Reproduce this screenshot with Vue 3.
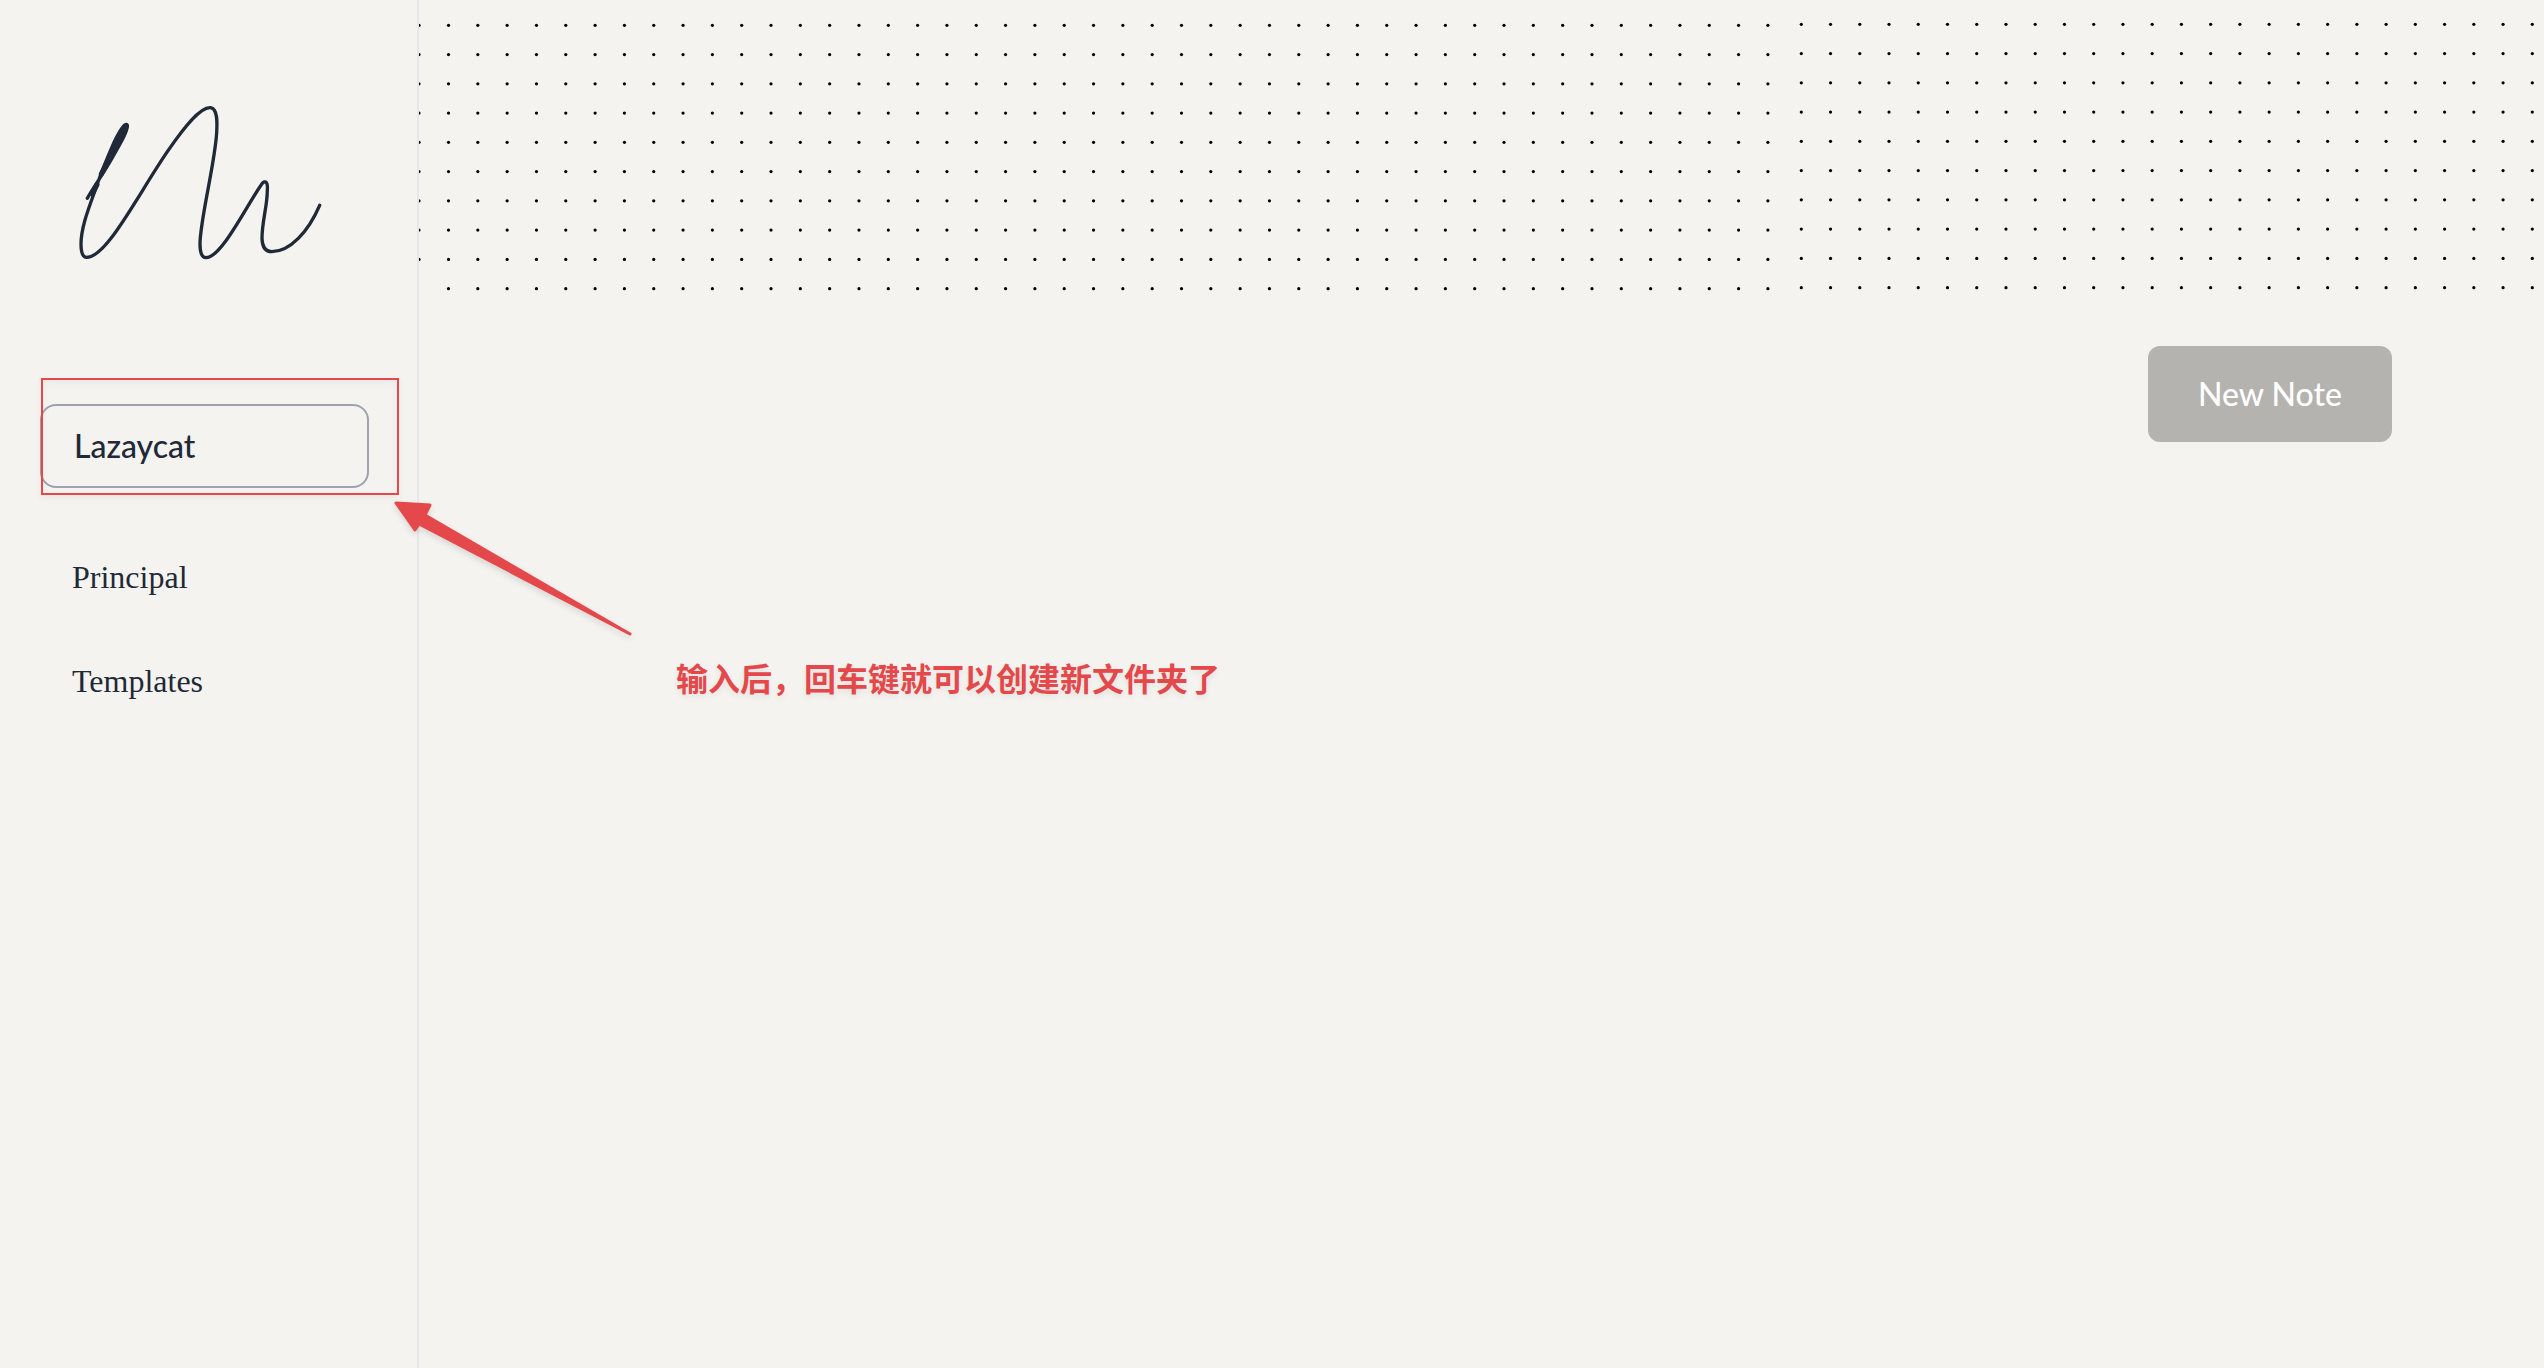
<script setup>
import { ref } from 'vue'

const folderName = ref('Lazaycat')
const folders = ['Principal', 'Templates']

const GAP = 29.26
const grid = (columns, startX, startY, gapX) => {
  const dots = []
  for (let r = 0; r < 10; r++) {
    for (let c = 0; c < columns; c++) {
      dots.push({ x: startX + c * gapX, y: startY + r * GAP })
    }
  }
  return dots
}
const dots = [
  ...grid(46, 29.5, 25.3, 29.32),
  ...grid(26, 1382.3, 24.3, 29.24),
  ...grid(1, 0, 25.3, 0).slice(0, 9),
]
</script>

<template>
  <div class="app">
    <aside class="sidebar">
      <svg class="logo" viewBox="0 0 840 570" aria-label="Logo" role="img">
        <path d="M82 325C98 295 124 260 146 222C176 170 205 122 202 106C196 94 178 125 163 155C144 198 124 246 111 285C88 350 63 410 63 462C63 488 68 502 80 502C140 502 230 320 322 185C370 115 420 50 452 53C475 57 471 105 470 128C465 220 420 390 420 462C420 490 425 503 438 503C485 503 560 345 606 281C616 270 624 275 622 300C622 350 606 392 606 446C607 475 618 485 635 485C690 485 745 425 779 346" />
        <path class="thick" d="M197 112L172 160L147 207L124 252M111 284L97 312" />
      </svg>

      <form class="create" @submit.prevent>
        <input v-model="folderName" type="text" aria-label="Folder name" />
        <span class="highlight"></span>
        <svg class="arrow" viewBox="0 0 260 150" aria-hidden="true">
          <path d="M12 12L46 14L41 24L246 143L35 33L31 39Z" />
        </svg>
        <p class="hint">输入后，回车键就可以创建新文件夹了</p>
      </form>

      <nav class="folders">
        <a v-for="name in folders" :key="name" href="#">{{ name }}</a>
      </nav>
    </aside>

    <main class="content">
      <header class="banner">
        <svg class="dots" aria-hidden="true">
          <circle v-for="(d, i) in dots" :key="i" :cx="d.x" :cy="d.y" r="1.6" />
        </svg>
      </header>
      <div class="actions">
        <button type="button">New Note</button>
      </div>
    </main>
  </div>
</template>

<style>
body {
  margin: 0;
  background: #f4f3ef;
}
</style>

<style scoped>
.app {
  display: flex;
  min-height: 100vh;
  background: #f4f3ef;
  color: #1f2937;
}

.sidebar {
  box-sizing: border-box;
  flex: 0 0 419px;
  padding: 90px 48px 0 40px;
  border-right: 2px solid #e5e7eb;
}

.logo {
  display: block;
  width: 280px;
  height: 190px;
  margin-left: 20px;
  fill: none;
  stroke: #1f2937;
  stroke-width: 10;
  stroke-linecap: round;
  stroke-linejoin: round;
}

.logo .thick {
  stroke-width: 15;
}

.create {
  position: relative;
  margin-top: 124px;
}

.create input {
  display: block;
  box-sizing: border-box;
  width: 100%;
  height: 84px;
  padding: 0 32px 2px;
  border: 2px solid #9ca3af;
  border-radius: 16px;
  outline: none;
  background: transparent;
  color: #1f2937;
  font: 500 32px Lato, sans-serif;
}

.highlight {
  position: absolute;
  inset: -26px -30px -7px 1px;
  border: 2px solid #e5484b;
  box-shadow: 0 3px 8px rgba(0, 0, 0, 0.05), inset 0 3px 8px rgba(0, 0, 0, 0.04);
  pointer-events: none;
}

.arrow {
  position: absolute;
  top: 87px;
  left: 344px;
  width: 260px;
  height: 150px;
  fill: #e5484b;
  stroke: #e5484b;
  stroke-width: 3;
  stroke-linejoin: round;
  filter: drop-shadow(0 3px 3px rgba(0, 0, 0, 0.12));
  pointer-events: none;
}

.hint {
  position: absolute;
  top: 249px;
  left: 636px;
  margin: 0;
  color: #e5484b;
  font: 700 32px/48px "Noto Sans CJK SC", sans-serif;
  white-space: nowrap;
  text-shadow: 0 3px 6px rgba(0, 0, 0, 0.08);
}

.folders {
  display: flex;
  flex-direction: column;
  gap: 56px;
  margin: 65px 32px 0;
}

.folders a {
  color: #1f2937;
  font: 32px/48px "Liberation Serif", serif;
  text-decoration: none;
}

.content {
  flex: 1;
  min-width: 0;
}

.banner {
  height: 306px;
  overflow: hidden;
}

.dots {
  display: block;
  width: 100%;
  height: 100%;
  fill: #000;
}

.actions {
  display: flex;
  justify-content: flex-end;
  padding: 40px 152px 0 0;
}

.actions button {
  width: 244px;
  height: 96px;
  padding: 0 0 2px;
  border: 0;
  border-radius: 12px;
  background: #b5b3af;
  color: #fff;
  font: 500 32px Lato, sans-serif;
}
</style>
